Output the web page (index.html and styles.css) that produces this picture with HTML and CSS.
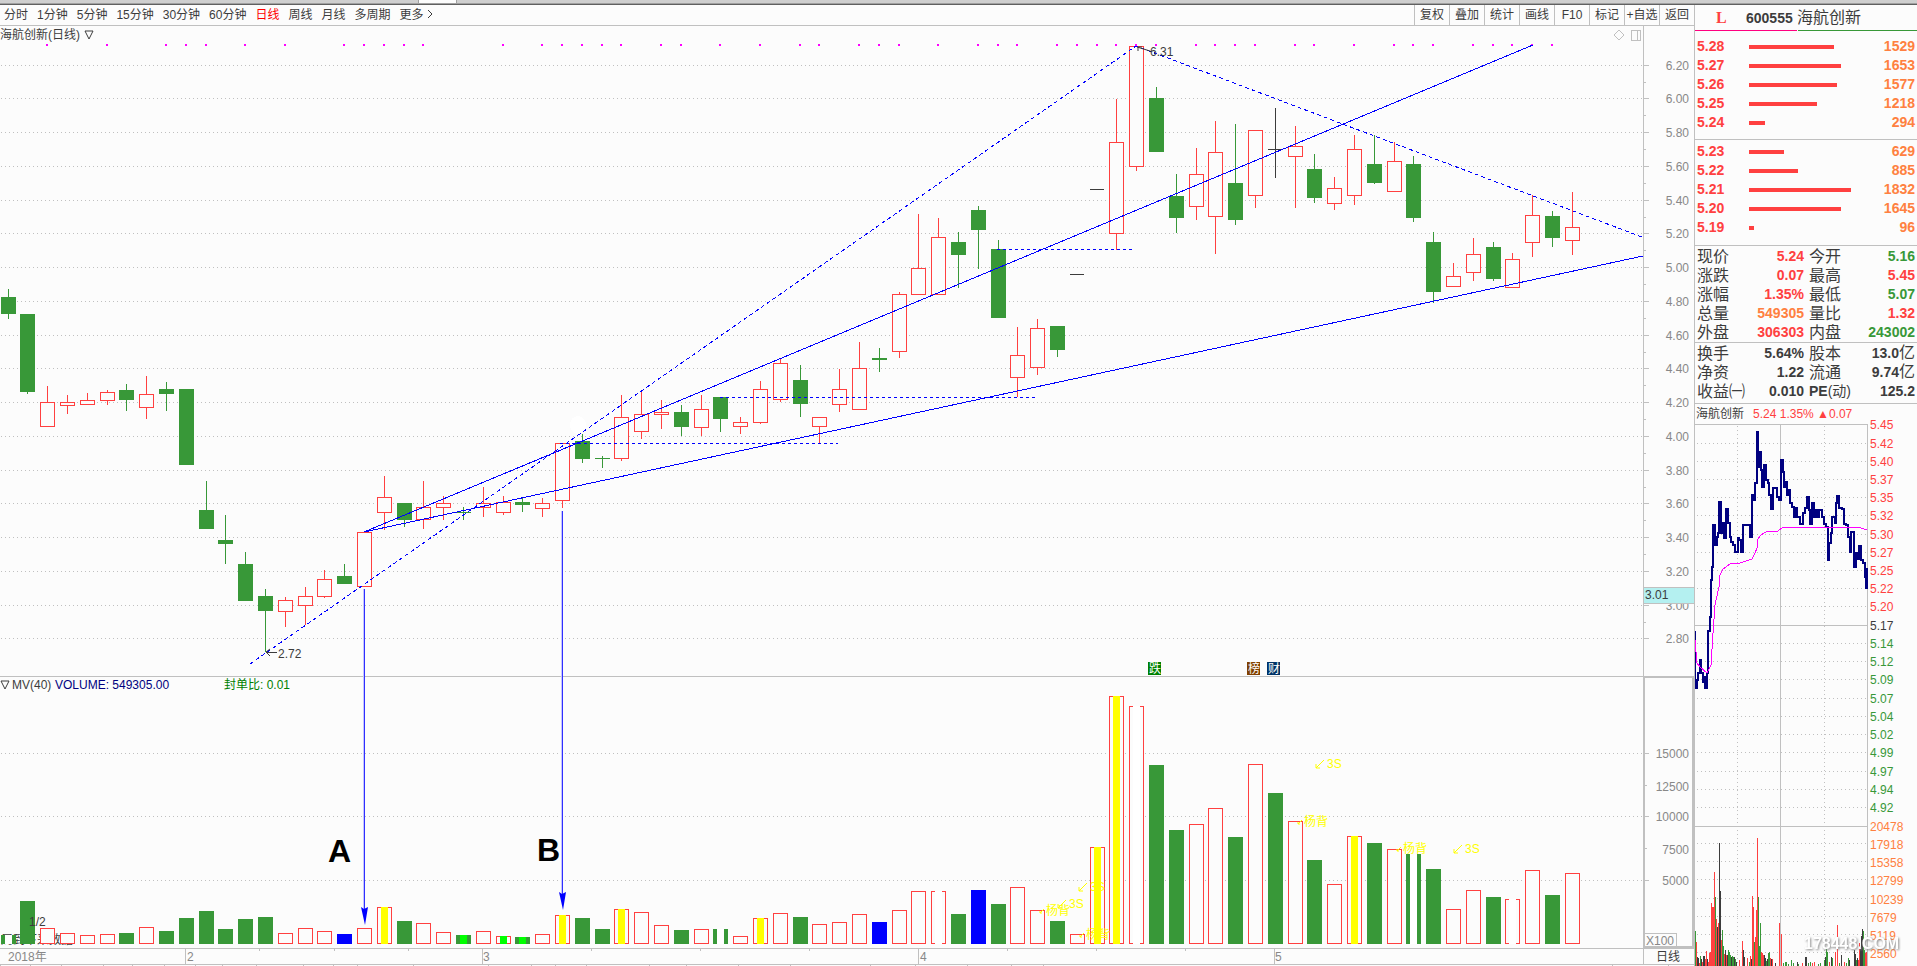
FILE: index.html
```html
<!DOCTYPE html>
<html lang="zh-CN">
<head>
<meta charset="utf-8">
<title>海航创新 日线</title>
<link rel="stylesheet" href="styles.css">
</head>
<body>
<div class="strip"><span class="strip-tab"></span></div>
<div class="layout">
  <main class="main">
    <div class="toolbar">
      <nav class="periods">
        <button>分时</button><button>1分钟</button><button>5分钟</button><button>15分钟</button><button>30分钟</button><button>60分钟</button><button class="active">日线</button><button>周线</button><button>月线</button><button>多周期</button><button>更多 <svg class="chevron" viewBox="0 0 6 10"><path d="M1 1l4 4-4 4"/></svg></button>
      </nav>
      <div class="tools">
        <button>复权</button><button>叠加</button><button>统计</button><button>画线</button><button>F10</button><button>标记</button><button>+自选</button><button>返回</button>
      </div>
    </div>
    <svg class="chart" id="chart" viewBox="0 26 1694 940"></svg>
  </main>
  <aside class="side">
    <header class="stock"><span class="flag">L</span><b class="code">600555</b><span class="name">海航创新</span></header>
    <div class="rule"><i></i><i></i></div>
    <table class="depth asks"><tbody id="asks"></tbody></table>
    <table class="depth bids"><tbody id="bids"></tbody></table>
    <table class="info first">
      <tr><th>现价</th><td class="up">5.24</td><th>今开</th><td class="down">5.16</td></tr>
      <tr><th>涨跌</th><td class="up">0.07</td><th>最高</th><td class="up">5.45</td></tr>
      <tr><th>涨幅</th><td class="up">1.35%</td><th>最低</th><td class="down">5.07</td></tr>
      <tr><th>总量</th><td class="vol">549305</td><th>量比</th><td class="up">1.32</td></tr>
      <tr><th>外盘</th><td class="up">306303</td><th>内盘</th><td class="down">243002</td></tr>
    </table>
    <table class="info second">
      <tr><th>换手</th><td>5.64%</td><th>股本</th><td>13.0<span class="unit">亿</span></td></tr>
      <tr><th>净资</th><td>1.22</td><th>流通</th><td>9.74<span class="unit">亿</span></td></tr>
      <tr><th>收益㈠</th><td>0.010</td><th class="ratio"><b>PE</b>(动)</th><td>125.2</td></tr>
    </table>
    <div class="mini-title"><span>海航创新</span><span class="up">5.24 1.35% ▲0.07</span></div>
    <svg class="mini" id="mini" viewBox="1695 424 222 542"></svg>
  </aside>
</div>
<script src="script.js"></script>
</body>
</html>
```
FILE: styles.css
```css
* { box-sizing: border-box; }
body {
  margin: 0;
  background: #fcfcfc;
  color: #3c3c3c;
  font: 12px/16px "Liberation Sans", "Noto Sans CJK SC", sans-serif;
}
button {
  padding: 0;
  border: 0;
  background: none;
  color: inherit;
  font: inherit;
  white-space: nowrap;
}
.strip {
  height: 5px;
  padding-left: 418px;
  background: #cfcfcf;
  border-bottom: 1px solid #606060;
  box-shadow: inset 0 -1px #a0a0a0;
}
.strip-tab { display: block; width: 39px; height: 3px; background: #fcfcfc; border: 1px solid #a0a0a0; border-width: 0 1px; }
.layout { display: flex; align-items: flex-start; }
.main { flex: 1; min-width: 0; }
.toolbar {
  display: flex;
  justify-content: space-between;
  height: 21px;
  border-bottom: 1px solid #c0c0c0;
}
.periods { display: flex; gap: 9px; padding-left: 4px; }
.active { color: #f00; }
.tools { display: flex; }
.tools button { width: 35px; border-left: 1px solid #c0c0c0; text-align: center; }
.chevron { width: 6px; height: 10px; fill: none; stroke: #3c3c3c; }
.chart, .mini { display: block; width: 100%; height: auto; }
.mini { overflow: visible; }

.side { width: 223px; border-left: 1px solid #c0c0c0; overflow: hidden; }
.stock { display: flex; align-items: center; height: 25px; padding: 1px 0 0 21px; }
.flag { width: 30px; color: #ff4040; font: bold 16px/16px "Liberation Serif", serif; }
.code { width: 51px; font-size: 14px; }
.name { font-size: 16px; }
.rule { display: flex; gap: 1px; }
.rule i { flex: 116; height: 1px; background: #389838; }
.rule i:first-child { flex: 100; background: #ff0080; }
table { width: 100%; border-spacing: 0; table-layout: fixed; }
th, td { height: 19px; padding: 0; line-height: 19px; white-space: nowrap; }
.depth { display: block; border-bottom: 1px solid #c0c0c0; color: #ff4040; font-weight: bold; font-size: 14px; }
.depth tbody { display: block; }
.depth tr { display: flex; align-items: center; padding: 0 2px; }
.depth th { width: 52px; text-align: left; }
.depth .track { flex: 1; padding-right: 12px; height: 4px; }
.depth .amount { width: 52px; text-align: right; color: #ff8040; }
.bar { display: block; height: 4px; background: #ff4040; }
.asks { padding: 6px 0 7px; }
.bids { padding: 2px 0 8px; }
.info { display: block; border-bottom: 1px solid #c0c0c0; }
.info tbody { display: block; }
.info tr { display: grid; grid-template-columns: 50px 57px 50px 1fr; padding: 0 2px; }
.info th { font-weight: normal; font-size: 16px; text-align: left; }
.info th:nth-child(3) { padding-left: 5px; }
.info .ratio { font-size: 14px; }
.info td { font-weight: bold; font-size: 14px; text-align: right; }
.info.first { padding: 1px 0 0; }
.info.second { padding: 1px 0 2px; }
.unit { font-weight: normal; font-size: 16px; line-height: 16px; }
.up { color: #ff4040; }
.down { color: #389838; }
.info .vol { color: #ff8040; }
.mini-title { display: flex; gap: 9px; height: 20px; padding-left: 1px; line-height: 20px; white-space: nowrap; }

svg text { font-size: 12px; fill: #3c3c3c; }
.crisp { shape-rendering: crispEdges; }
.line { stroke: #c0c0c0; fill: none; }
.thick { stroke: #c0c0c0; stroke-width: 2; fill: none; }
.dots { stroke: #c0c0c0; stroke-dasharray: 1 3; }
svg .axis { fill: #888; }
svg .end { text-anchor: end; }
svg .navy { fill: #000080; }
svg .green { fill: #008000; }
svg .yellow { fill: #ff0; }
svg .white { fill: #fff; }
svg .red { fill: #ff4040; }
svg .down { fill: #389838; }
svg .orange { fill: #ff8040; }
svg .mark { font-size: 32px; font-weight: bold; fill: #000; }
svg .water { font-size: 16px; font-weight: bold; fill: #fff; filter: drop-shadow(1px 1px 1px #888); }
.trend { stroke: #00f; fill: none; }
.dash { stroke-dasharray: 3 3; }
.slant { stroke-dasharray: 4 3; }
.yarrow { stroke: #ff0; fill: none; }
.note { stroke: #3c3c3c; fill: none; }
```
FILE: script.js
```js
const RED = '#ff4040', GREEN = '#389838', INK = '#3c3c3c', BG = '#fcfcfc';
const rect = (x, y, w, h, fill) => `<rect x="${x}" y="${y}" width="${w}" height="${h}" fill="${fill}"/>`;
const box = (x, y, w, h) => `<rect x="${x + .5}" y="${y + .5}" width="${w - 1}" height="${h - 1}" fill="${BG}" stroke="${RED}"/>`;
const path = (d, cls) => `<path class="${cls}" d="${d}"/>`;
const text = (x, y, s, cls = '') => `<text x="${x}" y="${y}" class="${cls}">${s}</text>`;
const centre = i => Math.floor(8 + i * 19.8 + .001);

// colour, high, body top, body bottom, low
const candles = [
  'g 289 297 314 319','g 314 314 392 394','r 386 402 427 427','r 395 402 406 414','r 393 400 405 405','r 390 392 401 405','g 384 390 400 411','r 376 394 408 419','g 382 389 394 411','g 389 389 465 465',
  'g 481 510 529 529','g 515 540 544 564','g 552 564 601 601','g 589 596 611 652','r 597 600 612 627','r 587 596 606 625','r 570 579 597 598','g 564 576 584 584','r 532 532 587 587','r 476 497 513 530',
  'g 503 503 520 527','r 481 507 520 529','r 496 503 508 520','g 507 512 513 520','r 487 503 508 517','r 496 502 513 515','g 498 502 505 512','r 498 503 509 517','r 443 443 501 508','g 434 441 459 463',
  'g 456 458 459 468','r 395 417 459 461','r 391 414 432 439','r 400 412 415 429','g 405 412 427 436','r 395 409 428 436','g 397 397 419 432','r 417 422 427 434','r 381 389 423 424','r 358 363 400 402',
  'g 365 380 404 417','r 417 417 427 443','r 369 389 405 412','r 342 368 410 410','g 348 358 360 372','r 292 294 352 358','r 214 268 295 295','r 218 237 295 295','g 232 242 255 288','g 206 210 230 269',
  'g 240 249 318 318','r 327 355 378 397','r 319 328 368 375','g 326 326 350 357','k 274 274 275 275','k 189 189 190 190','r 99 142 234 250','r 46 46 167 171','g 87 98 152 152','g 174 196 218 233',
  'r 148 174 207 220','r 121 152 217 254','g 124 183 220 225','r 130 130 196 208','k 108 149 150 178','r 126 146 157 208','g 154 169 198 203','r 177 188 204 210','r 135 149 196 205','g 135 164 183 184',
  'r 142 161 192 192','g 156 164 218 222','g 232 242 292 303','r 263 276 287 287','r 238 254 273 281','g 242 247 279 281','r 253 259 288 288','r 195 215 243 257','g 211 216 238 247','r 192 227 241 255'
];
// colour (+ stripe colour) and top of each volume bar
const volumes = 'gw935 g901 r928 r933 r935 r934 g933 r927 g931 g918 g911 g929 g919 g917 r933 r928 r931 b934 r928 ry907 g921 r923 r932 gl935 r931 rl936 gl937 r934 ry915 g918 g929 ry909 r912 r925 g930 r929 gw929 r936 ry918 r913 g917 r924 r922 r914 b922 r910 r891 rw891 g914 b890 g904 r887 r910 g921 r934 ry847 ry696 rw706 g765 g830 r824 r808 g837 r764 g793 r821 g860 r884 ry836 g843 r849 gw854 g869 r909 r890 g897 rw899 r870 g895 r873'.split(' ');
const stripe = { w: '#fff', y: '#ff0', l: '#0f0' };
const signals = [2,5,8,9,10,12,14,17,18,19,20,21,25,27,28,29,30,31,33,34,36,38,40,41,43,44,45,47,49,50,51,53,54,55,56,57,58,60,61,62,63,65,66,68,70,71,72,74,75,76,77,78];
const levels = [65,98,132,166,200,233,267,301,335,368,402,436,470,503,537,571,605,638];

function drawChart() {
  let g = '';
  levels.forEach((y, i) => {
    g += path(`M1 ${y + .5}H1643`, 'dots') + path(`M1643 ${y + .5}h6`, 'line');
    if (i < 17) g += path(`M1643 ${y + 17.5}h3`, 'line');
  });
  [753, 816, 880].forEach(y => { g += path(`M1 ${y + .5}H1643`, 'dots') + path(`M1643 ${y + .5}h6`, 'line'); });
  g += path('M0 676.5H1694M0 948.5H1694M0 964.5H1694M1643.5 26V964', 'line');
  g += path('M1644 677H1693V947H1644z', 'thick');
  g += path('M1645 785.5h2M1645 848.5h2M1645 933.5H1676.5V946', 'line');
  g += path('M185.5 948V964M482.5 948V964M918.5 948V964M1274.5 948V964', 'line');
  [259, 334, 408, 591, 700, 809, 1007, 1096, 1185].forEach(x => { g += path(`M${x + .5} 948v3`, 'line'); });
  [0, 30, 61, 103, 132, 164, 195, 222, 256, 303, 333, 357, 413, 488, 531, 555, 586, 649, 686, 738, 790, 870, 915, 967, 1011, 1043, 1612, 1668].forEach(x => { g += path(`M${x + .5} 964v2`, 'line'); });
  g += `<ellipse cx="578" cy="425" rx="8" ry="9" fill="#fff"/>`;
  candles.forEach((row, i) => {
    const [c, ...v] = row.split(' ');
    const [hi, top, bot, lo] = v.map(Number), x = centre(i);
    const col = { r: RED, g: GREEN, k: INK }[c];
    if (lo > hi) g += rect(x, hi, 1, lo - hi, col);
    if (c === 'r') g += box(x - 7, top, 15, bot - top);
    else g += rect(x - 7, top, c === 'k' ? 14 : 15, bot - top, col);
  });
  signals.forEach(i => { g += rect(centre(i) - 1, 44, 2, 2, '#f0f'); });
  volumes.forEach((v, i) => {
    const y = +v.slice(-3), x = centre(i);
    if (v[0] === 'r') g += box(x - 7, y, 15, 944 - y);
    else g += rect(x - 7, y, 15, 944 - y, v[0] === 'b' ? '#00f' : GREEN);
    if (stripe[v[1]]) g += rect(x - 3, y, 7, 944 - y, stripe[v[1]]);
  });
  g += path('M364 532L1533 45M364 532L1643 256', 'trend');
  g += path('M560 443.5H838M720 397.5H1036M997 249.5H1132', 'trend dash');
  g += path('M250 664L1136 46L1642 237', 'trend slant');
  g += rect(363, 589, 1, 320, '#c4c4ff') + rect(364, 589, 1, 322, '#3030ff') + rect(561, 511, 1, 384, '#c4c4ff') + rect(562, 511, 1, 386, '#3030ff');
  g += rect(1644, 587, 50, 17, '#b4f0f0') + path('M1644 587.5h50M1644 603.5h50', 'line');
  g += rect(1148, 662, 13, 13, '#008000') + rect(1247, 662, 13, 13, '#804000') + rect(1267, 662, 13, 13, '#003366');
  g += path('M1631.5 30.5h9v10h-9zM1637.5 30v11', 'line');

  let t = `<path fill="#00f" d="M361 907l3 2 4-2-3 18zM559 892l3 2 4-2-3 18z"/>`;
  t += path('M1619 30l5 5-5 5-5-5z', 'line');
  t += path('M266 652.5h11M270 649l-4 3 4 4M1137 47l13 4M1138 51v-4h4', 'note');
  t += path('M85 31h8l-4 8zM1 681h8l-4 8z', 'note');
  t += text(0, 39, '海航创新(日线)');
  levels.forEach((y, i) => { if (i !== 16) t += text(1689, y + 5, (6.2 - i * .2).toFixed(2), 'axis end'); });
  t += `<text x="1689" y="610" class="axis end" clip-path="url(#below)">3.00</text>`;
  [['15000', 753], ['12500', 786], ['10000', 816], ['7500', 849], ['5000', 880]].forEach(a => { t += text(1689, a[1] + 5, a[0], 'axis end'); });
  t += text(1645, 599, '3.01') + text(1646, 945, 'X100', 'axis') + text(1656, 961, '日线');
  t += text(12, 689, 'MV(40)') + text(55, 689, 'VOLUME: 549305.00', 'navy') + text(224, 689, '封单比: 0.01', 'green');
  t += text(8, 961, '2018年', 'axis') + text(187, 961, '2', 'axis') + text(483, 961, '3', 'axis') + text(920, 961, '4', 'axis') + text(1275, 961, '5', 'axis');
  t += text(278, 658, '2.72') + text(1150, 56, '6.31') + text(29, 926, '1/2');
  t += text(328, 862, 'A', 'mark') + text(537, 861, 'B', 'mark');
  t += text(1149, 673, '跌', 'white') + text(1248, 673, '榜', 'white') + text(1268, 673, '财', 'white');
  [[1327, 768], [1090, 891], [1069, 908], [1465, 853]].forEach(([x, y]) => {
    t += text(x, y, '3S', 'yellow') + path(`M${x - 3} ${y - 8}l-8 8M${x - 11} ${y - 4}v4h4`, 'yarrow');
  });
  [[1304, 826], [1046, 915], [1086, 939], [1403, 853]].forEach(([x, y]) => {
    t += text(x, y, '杨背', 'yellow') + path(`M${x - 2} ${y - 6}l-4 4M${x - 6} ${y - 4}v2h2`, 'yarrow');
  });
  document.getElementById('chart').innerHTML =
    `<defs><clipPath id="below"><rect x="1644" y="604" width="50" height="20"/></clipPath></defs>` +
    text(1, 944, '周到下采数据') + `<g class="crisp">${g}</g>` + t;
}

// samples are kept at three units to the pixel
const toPixels = s => s.split(' ').map(p => { const [x, y] = p.split(','); return [Math.round(x / 3 + 1640), Math.round(y / 3 + 400)]; });
const smooth = s => 'M' + toPixels(s).map(p => p.join(' ')).join('L');
const stepped = s => toPixels(s).map(([x, y], i) => i ? `H${x}V${y}` : `M${x} ${y}`).join('');
const priceLine = '166,693 166,864 170,840 175,820 179,780 182,820 188,845 193,830 196,864 200,820 205,693 210,650 213,540 217,500 220,375 225,435 230,410 235,400 238,305 242,400 248,370 253,415 259,328 264,370 269,410 274,425 280,435 284,457 290,455 293,415 298,420 303,457 308,375 326,375 331,412 336,285 341,300 346,250 350,245 351,95 355,200 358,155 363,210 367,262 373,196 377,240 384,250 388,285 393,327 398,265 405,265 411,290 417,300 423,180 428,215 432,262 436,245 440,285 446,270 450,310 457,320 462,350 466,325 472,350 479,372 485,372 490,340 496,325 502,290 506,330 511,372 515,310 522,350 528,330 534,350 537,330 545,350 552,372 558,380 563,480 568,430 573,400 577,350 584,370 588,310 592,288 596,325 607,328 612,372 618,375 624,410 630,455 634,395 642,500 648,460 653,478 658,437 663,480 670,490 674,530 677,565 680,505';
const averageLine = '165,720 170,790 180,802 200,818 212,795 218,700 225,615 236,560 240,525 248,508 270,493 300,490 337,478 345,460 350,445 354,418 362,405 378,397 415,392 425,385 455,382 530,380 600,380 655,381 672,386 680,390';
const ticks = 'g166,723 r169,756 k172,800 k175,804 r178,820 g181,798 k184,806 r187,815 k190,798 k193,798 r196,808 r199,783 k202,806 r205,815 r208,790 r211,785 r214,640 r217,650 r220,650 r223,546 g226,620 r229,687 k232,710 r235,698 k238,459 k241,603 r244,750 g247,720 g250,768 r253,792 k256,780 r259,795 k262,795 g265,780 g268,785 g271,796 k274,800 g277,798 g280,802 k283,800 g286,808 k289,815 r298,810 r307,753 k310,780 k313,800 r322,805 g328,815 r331,798 k334,808 r337,618 r340,650 g343,756 r346,740 r349,660 r352,444 g355,620 g358,768 g361,700 r364,785 r367,790 r370,795 k373,795 k376,805 g379,812 k382,806 g385,790 g388,786 r391,805 k394,806 r397,808 k406,818 r418,700 r424,733 g430,818 g436,815 g439,815 g445,822 g454,810 g460,820 k472,815 g475,822 r487,820 k496,800 k499,800 g505,820 g511,815 r517,820 r523,815 g535,822 g541,818 g553,810 k556,800 g559,775 g562,785 r568,815 k574,800 g577,805 r586,785 r592,705 g598,820 k604,795 r613,815 g619,818 g625,805 k628,810 k643,780 k646,792 g649,810 k652,805 r655,810 r658,760 k661,770 k664,738 k667,716 g670,722 g673,780 r676,790 r679,786'.split(' ');

function drawMini() {
  const rows = [[424, '5.45'], [443, '5.42'], [461, '5.40'], [479, '5.37'], [497, '5.35'], [515, '5.32'], [534, '5.30'], [552, '5.27'], [570, '5.25'], [588, '5.22'], [606, '5.20'], [625, '5.17'], [643, '5.14'], [661, '5.12'], [679, '5.09'], [698, '5.07'], [716, '5.04'], [734, '5.02'], [752, '4.99'], [771, '4.97'], [789, '4.94'], [807, '4.92'], [826, '20478'], [843, '17918'], [861, '15358'], [879, '12799'], [898, '10239'], [916, '7679'], [934, '5119'], [952, '2560']];
  let g = path('M1737.5 426V966M1824.5 426V966', 'dots'), t = '';
  rows.forEach(([y, s], i) => {
    const solid = i === 0 || i === 11 || i === 22;
    g += path(`M1697 ${y + .5}H1867`, solid ? 'line' : 'dots');
    t += text(1870, y + (i > 22 ? 6 : 5), s, i < 11 ? 'red' : i === 11 ? '' : i < 22 ? 'down' : 'orange');
  });
  g += path('M1695 424.5h3M1695 625.5h3M1695 826.5h3M1780.5 424V966M1867.5 424V966', 'line');
  ticks.forEach(v => {
    const [x, y] = v.slice(1).split(',');
    const top = Math.round(y / 3 + 690);
    g += rect(Math.floor(x / 3 + 1640), top, 1, 966 - top, { r: RED, g: GREEN, k: INK }[v[0]]);
  });
  g += `<path d="${stepped(priceLine)}" fill="none" stroke="#000080" stroke-width="2"/>`;
  g += `<path d="${smooth(averageLine)}" fill="none" stroke="#f0f"/>`;
  document.getElementById('mini').innerHTML = `<g class="crisp">${g}</g>` + t + text(1804, 949, '178448.COM', 'water');
}

function drawDepth(id, rows) {
  document.getElementById(id).innerHTML = rows.map(([p, n]) =>
    `<tr><th>${p}</th><td class="track"><span class="bar" style="width:${n / 18.32}%"></span></td><td class="amount">${n}</td></tr>`).join('');
}

drawChart();
drawMini();
drawDepth('asks', [['5.28', 1529], ['5.27', 1653], ['5.26', 1577], ['5.25', 1218], ['5.24', 294]]);
drawDepth('bids', [['5.23', 629], ['5.22', 885], ['5.21', 1832], ['5.20', 1645], ['5.19', 96]]);
```
